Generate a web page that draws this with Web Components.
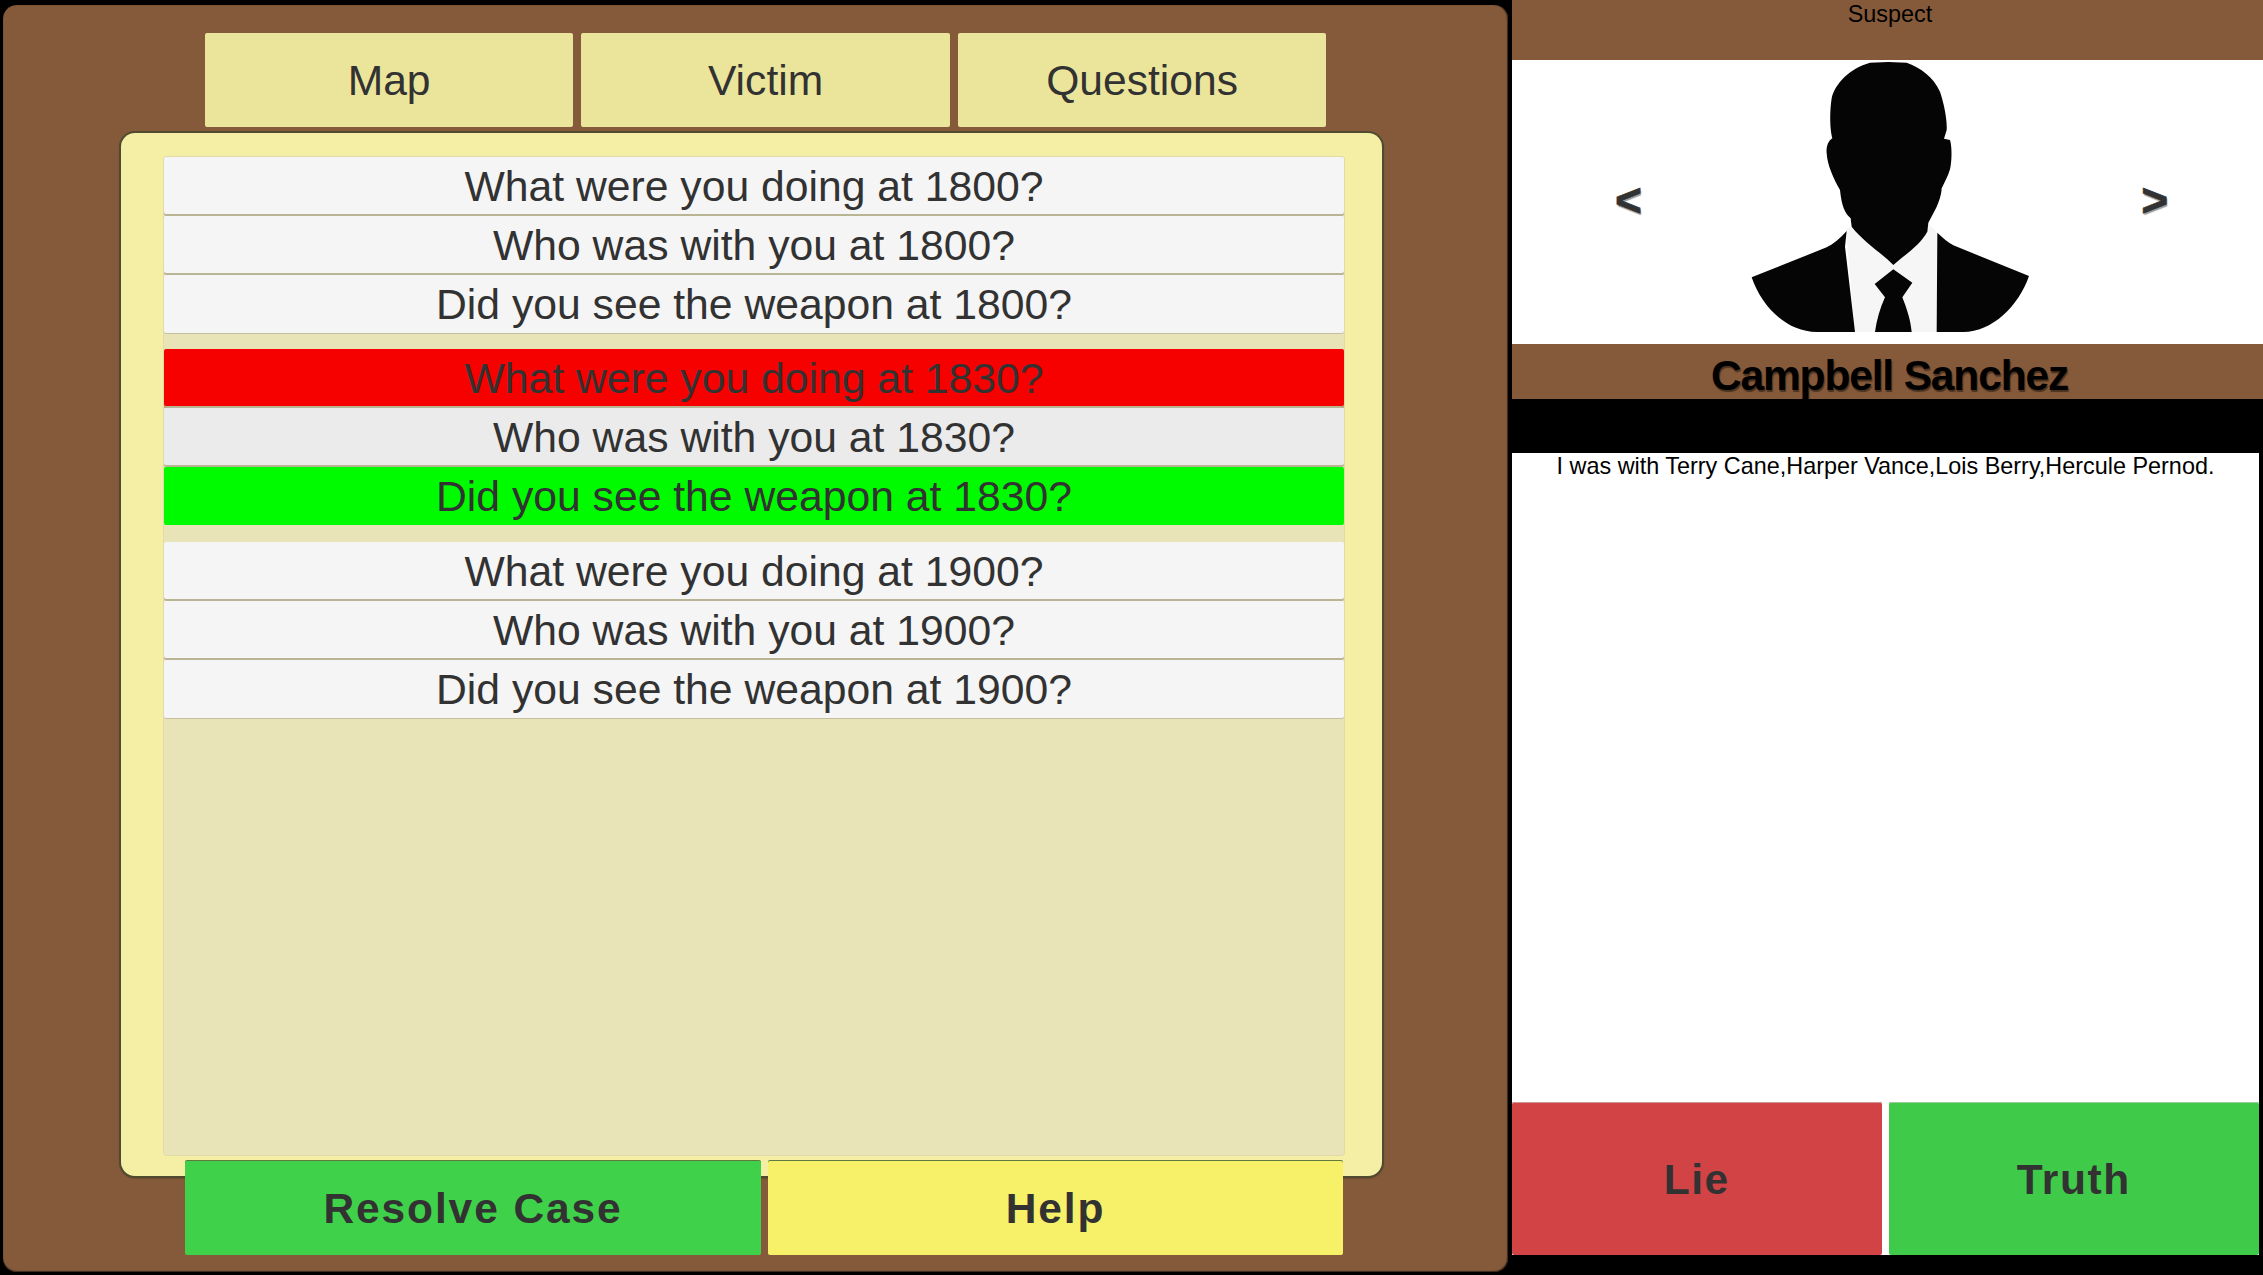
<!DOCTYPE html>
<html lang="en"><head><meta charset="utf-8"><title>Suspect</title>
<style>
html,body{margin:0;padding:0;background:#000;height:1275px;overflow:hidden}
body{font-family:"Liberation Sans",Arial,sans-serif;color:#323232}
game-screen{width:2263px;height:1275px}
</style></head><body>
<game-screen>
  <case-board slot="board">
    <tab-button slot="tabs">Map</tab-button>
    <tab-button slot="tabs">Victim</tab-button>
    <tab-button slot="tabs">Questions</tab-button>
    <question-group>
      <question-row>What were you doing at 1800?</question-row>
      <question-row>Who was with you at 1800?</question-row>
      <question-row>Did you see the weapon at 1800?</question-row>
    </question-group>
    <question-group>
      <question-row tone="red">What were you doing at 1830?</question-row>
      <question-row tone="grey">Who was with you at 1830?</question-row>
      <question-row tone="green">Did you see the weapon at 1830?</question-row>
    </question-group>
    <question-group>
      <question-row>What were you doing at 1900?</question-row>
      <question-row>Who was with you at 1900?</question-row>
      <question-row>Did you see the weapon at 1900?</question-row>
    </question-group>
    <action-button slot="actions" tone="resolve">Resolve Case</action-button>
    <action-button slot="actions" tone="help">Help</action-button>
  </case-board>
  <suspect-panel slot="suspect" name="Campbell Sanchez">
    I was with Terry Cane,Harper Vance,Lois Berry,Hercule Pernod.
    <verdict-button slot="verdict" tone="lie">Lie</verdict-button>
    <verdict-button slot="verdict" tone="truth">Truth</verdict-button>
  </suspect-panel>
</game-screen>
<script>
function define(name, html, extra){
  class C extends HTMLElement{
    constructor(){super();this.attachShadow({mode:'open'}).innerHTML=html;}
    connectedCallback(){ if(extra) extra(this); }
  }
  customElements.define(name,C);
}
define('game-screen',`<style>
:host{display:flex;background:#000}
.l{display:block;width:1512px;flex:none}
.r{display:block;width:751px;flex:none}
</style><div class="l"><slot name="board"></slot></div><div class="r"><slot name="suspect"></slot></div>`);

define('case-board',`<style>
:host{display:flex;flex-direction:column;align-items:flex-start;box-sizing:border-box;width:1505px;height:1267px;margin:5px 0 0 3px;
 background:#855a3a;border-radius:14px;padding:28px 0 0 118px;box-shadow:inset 0 -1px 1px #3a2a1c,inset -1px 0 1px #3a2a1c}
.tabs{display:flex;gap:8.3px;margin-left:84px}
.sheet{box-sizing:border-box;width:1261px;height:1043px;margin-top:6px;padding:24px 38px 20px 43px;background:#f5eea5;border-radius:14px;
 box-shadow:0 0 0 2px #4f4a30,0 1px 2px 1px #3a2a1c}
.list{box-sizing:border-box;height:998px;background:#e8e4b8;border-radius:3px;box-shadow:0 0 0 1px #e0dba8;display:flex;flex-direction:column;gap:15.3px}
.actions{display:flex;gap:7px;margin:-15px 0 0 64px}
</style><div class="tabs"><slot name="tabs"></slot></div>
<div class="sheet"><div class="list"><slot></slot></div></div>
<div class="actions"><slot name="actions"></slot></div>`);

define('tab-button',`<style>
:host{display:flex;align-items:center;justify-content:center;box-sizing:border-box;padding-top:1px;width:368.2px;height:94px;background:#ebe59b;border-radius:2px;font-size:42.6px;color:#323232}
</style><slot></slot>`);

define('question-group',`<style>
:host{display:flex;flex-direction:column}
</style><slot></slot>`);

define('question-row',`<style>
:host{display:flex;align-items:center;justify-content:center;box-sizing:border-box;height:59px;background:#f5f5f5;border-radius:2px;font-size:42.7px;color:#323232;box-shadow:inset 0 -2px 0 #b8b494}
:host(:last-child){box-shadow:inset 0 -1px 0 #c4bfa0}
:host([tone=red]){background:#f60000}
:host([tone=grey]){background:#ebebeb}
:host([tone=green]){background:#00fb00;box-shadow:none;height:58px;margin-bottom:1px}
</style><slot></slot>`);

define('action-button',`<style>
:host{display:flex;align-items:center;justify-content:center;box-sizing:border-box;padding-top:2px;height:94px;border-radius:2px;font-size:42.5px;font-weight:700;letter-spacing:1.9px;color:#323232;box-shadow:0 -1px 0 #5e7a3e}
:host([tone=resolve]){width:576px;background:#40d14a}
:host([tone=help]){width:575px;background:#f7f069}
</style><slot></slot>`);

define('suspect-panel',`<style>
:host{display:flex;flex-direction:column;height:1275px;background:#000;color:#000}
.head{height:60px;padding-left:5px;box-sizing:border-box;background:#855a3a;text-align:center;font-size:23.4px;line-height:28px;flex:none}
.port{height:284px;background:#fff;display:flex;align-items:center;justify-content:space-between;padding:0 95px 0 103px;flex:none;position:relative}
.arrow{font-size:46px;font-weight:700;color:#323232;-webkit-text-stroke:.7px #323232;text-shadow:1px 2px 1px #999;line-height:1;margin-top:-4px}
svg{display:block;position:absolute;left:208px;top:0;width:340px;height:290px;margin-top:-10px}
.name{height:55px;padding-left:4px;box-sizing:border-box;background:#855a3a;text-align:center;font-size:42.5px;font-weight:700;line-height:63px;letter-spacing:-1.15px;text-shadow:1px 2px 1px #4a3220;flex:none;overflow:hidden}
.gap{height:54px;flex:none}
.said{height:649px;width:747px;background:#fff;text-align:center;font-size:23.4px;line-height:27px;box-sizing:border-box;flex:none}
.verdict{display:flex;gap:7.5px;width:747px;background:#fff;flex:none}
</style>
<div class="head">Suspect</div>
<div class="port"><span class="arrow">&lt;</span>
<svg viewBox="0 0 1020 870" aria-hidden="true">
<path fill="#f6f6f6" d="M378 540L395 528L520 640L625 522L652 546L650 846H405Z"/>
<path fill="#050505" d="M450 38L505 36L560 38C600 52 640 80 660 125C672 160 682 210 680 240L672 266L690 270C696 290 696 330 690 358C684 380 672 400 665 415C664 440 652 470 640 490L625 518L622 545C600 585 560 610 520 645C480 605 430 575 395 530L392 505C375 490 365 470 360 420C340 385 322 345 320 310C318 290 325 272 337 265C330 240 328 190 335 145C345 100 390 55 450 38Z"/>
<path fill="#050505" d="M380 543C360 565 340 582 320 592L95 682C125 770 200 846 290 846H405L375 590Z"/>
<path fill="#050505" d="M652 548C670 565 685 578 700 586L927 678C895 770 815 846 730 846H650Z"/>
<path fill="#050505" d="M520 658L577 698L547 742C560 775 572 810 575 846H465C470 810 480 775 495 742L464 702Z"/>
</svg>
<span class="arrow">&gt;</span></div>
<div class="name" id="n"></div>
<div class="gap"></div>
<div class="said"><slot></slot></div>
<div class="verdict"><slot name="verdict"></slot></div>`, el=>{el.shadowRoot.getElementById('n').textContent=el.getAttribute('name');});

define('verdict-button',`<style>
:host{display:flex;align-items:center;justify-content:center;box-sizing:border-box;padding-top:2px;width:369.5px;height:153px;border-radius:2px;font-size:42.5px;font-weight:700;letter-spacing:1.6px;color:#323232;box-shadow:inset 0 1px 0 #c99}
:host([tone=lie]){background:#d24346}
:host([tone=truth]){background:#40ca49;box-shadow:inset 0 1px 0 #9c9}
</style><slot></slot>`);
</script>
</body></html>
